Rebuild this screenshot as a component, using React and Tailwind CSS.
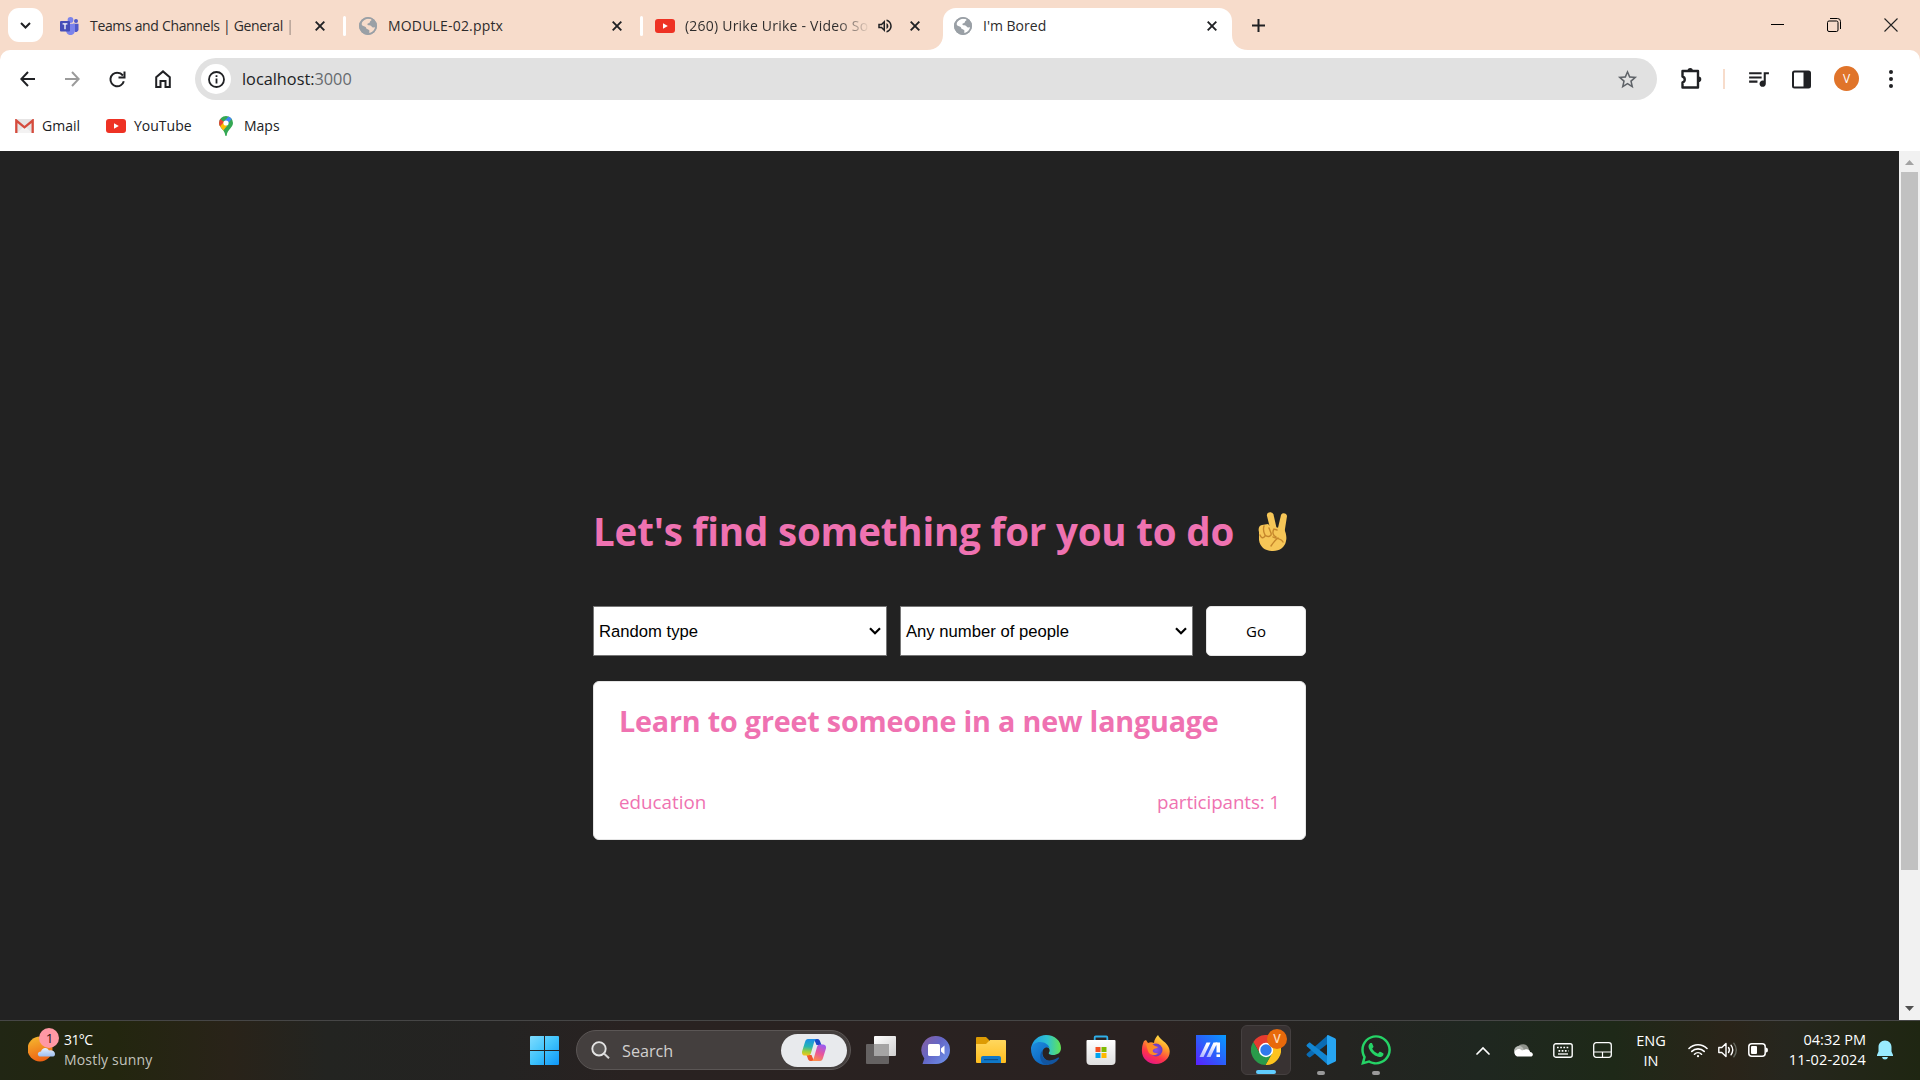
import React from "react";
import { MdQueueMusic, MdStarBorder, MdOutlineVolumeUp } from "react-icons/md";
import { FaWhatsapp } from "react-icons/fa";

const UI = "font-['Open_Sans','Noto_Sans',sans-serif]";

function Label({ className = "", children }) {
  return <span className={"shrink-0 whitespace-nowrap " + className}>{children}</span>;
}

function CloseX({ className = "" }) {
  return (
    <svg className={"h-[10px] w-[10px] shrink-0 " + className} viewBox="0 0 10 10">
      <path d="M.7.7l8.6 8.6M9.3.7L.7 9.3" stroke="#202124" strokeWidth="1.9" />
    </svg>
  );
}

function Globe({ hole }) {
  return (
    <svg className="h-[18px] w-[18px] shrink-0" viewBox="0 0 18 18">
      <circle cx="9" cy="9" r="9" fill="#9aa0a6" />
      <path
        d="M7 2.2c2-.7 4.500-.4 5.800.4-.2 1.400-1.800 1.300-2 2.600-.3 1.200-2.300.7-2.400 2.100 0 1.200 1.700.8 2.900 1.100 1.700.4 1.300 2 2.900 2.200l1.900-.3c-.4 2.700-2.600 5.200-5.600 5.700-.8-.9.6-2.200-.5-3.100-1-.8-2.800-.5-2.900-2.100-.1-1.500-2.600-1.300-3.800-2.300C1.700 6.500 3.600 3.300 7 2.200z"
        fill={hole}
      />
      <circle cx="9" cy="9" r="8.200" fill="none" stroke="#9aa0a6" strokeWidth="1.600" />
    </svg>
  );
}

function YouTube() {
  return (
    <svg className="h-[14px] w-5 shrink-0" viewBox="0 0 20 14">
      <rect width="20" height="14" rx="3" fill="#ee3224" />
      <path d="M8 4.200v5.600L12.800 7z" fill="#fff" />
    </svg>
  );
}

function Teams() {
  return (
    <svg className="h-[18px] w-[19px] shrink-0" viewBox="0 0 19 18">
      <circle cx="16" cy="4" r="2" fill="#5059c9" />
      <circle cx="10.500" cy="3" r="2.900" fill="#7b83eb" />
      <path d="M13 6.700h5.500v5.500c0 2-1.500 3-3.500 2.800z" fill="#5059c9" />
      <path d="M6 6.700h9v6.300c0 3-2 5-4.500 5S6 16 6 13z" fill="#7b83eb" />
      <rect y="4" width="10" height="10.500" rx="1" fill="#464eb8" />
      <path d="M2.600 6.800h4.800M5 6.800v5.400" stroke="#fff" strokeWidth="1.300" />
    </svg>
  );
}

function TabStrip() {
  return (
    <div className="flex h-[50px] items-center bg-[#f7dccb] pt-px text-[14px] text-[#2d2b2b]">
      <div className="-mt-px ml-2 flex h-[34px] w-[35px] shrink-0 items-center justify-center rounded-[11px] bg-white">
        <svg className="h-[7px] w-[11px]" viewBox="0 0 11 7">
          <path d="M1 1l4.500 4.500L10 1" fill="none" stroke="#202124" strokeWidth="2" />
        </svg>
      </div>
      <div className="ml-[17px] flex w-[283px] shrink-0 items-center">
        <Teams />
        <div className="ml-[11px] w-[205px] shrink-0">
          <Label className="tracking-[-0.33px]">Teams and Channels | General <span className="opacity-50">|</span></Label>
        </div>
        <CloseX className="ml-5" />
        <div className="ml-[18px] h-5 w-[3px] shrink-0 rounded bg-white" />
      </div>
      <div className="ml-[16px] flex w-[284px] shrink-0 items-center">
        <Globe hole="#f7dccb" />
        <div className="ml-[11px] w-[224px] shrink-0">
          <Label className="tracking-[0.18px]">MODULE-02.pptx</Label>
        </div>
        <CloseX />
        <div className="ml-[18px] h-5 w-[3px] shrink-0 rounded bg-white" />
      </div>
      <div className="ml-3 flex w-[272px] shrink-0 items-center">
        <YouTube />
        <div className="ml-[10px] w-[184px] shrink-0">
          <Label className="bg-gradient-to-r from-[#2d2b2b] from-82% to-[#e9d0c0] bg-clip-text tracking-[0.22px] text-transparent">
            (260) Urike Urike - Video So
          </Label>
        </div>
        <MdOutlineVolumeUp className="ml-[7px] h-[18px] w-[18px] shrink-0 text-[#202124]" />
        <CloseX className="ml-4" />
      </div>
      <div className="mt-[7px] flex h-[42px] w-[321px] shrink-0">
        <svg className="h-full w-4" viewBox="0 0 16 42">
          <path d="M0 42C9 42 16 36 16 27V42z" fill="#fff" />
        </svg>
        <div className="flex w-[289px] items-center rounded-t-[13px] bg-white pb-[7px] pl-[11px]">
          <Globe hole="#fff" />
          <div className="ml-[11px] w-[224px]">
            <Label>I'm Bored</Label>
          </div>
          <CloseX />
        </div>
        <svg className="h-full w-4" viewBox="0 0 16 42">
          <path d="M16 42C7 42 0 36 0 27V42z" fill="#fff" />
        </svg>
      </div>
      <svg className="ml-1 h-[13px] w-[13px] shrink-0" viewBox="0 0 13 13">
        <path d="M6.500 0v13M0 6.500h13" stroke="#202124" strokeWidth="2" />
      </svg>
      <svg className="-mt-0.5 ml-[506px] h-[13px] w-[13px] shrink-0" viewBox="0 0 13 13">
        <path d="M0 6.500h13" stroke="#000" />
      </svg>
      <svg className="-mt-0.5 ml-[43px] h-[14px] w-[14px] shrink-0" viewBox="0 0 14 14">
        <rect x=".5" y="3" width="10.500" height="10.500" rx="1.500" fill="none" stroke="#000" />
        <path d="M3 .5h7.500a3 3 0 013 3V11" fill="none" stroke="#000" />
      </svg>
      <svg className="-mt-0.5 ml-[43px] h-[14px] w-[14px] shrink-0" viewBox="0 0 14 14">
        <path d="M.5.5l13 13M13.500.5l-13 13" stroke="#222" strokeWidth="1.100" />
      </svg>
    </div>
  );
}

function Toolbar() {
  return (
    <div className="bg-[#f7dccb]">
      <div className="flex h-[50px] items-center rounded-t-[10px] bg-white pt-2">
        <svg className="ml-5 h-4 w-[15px]" viewBox="0 0 15 16">
          <path d="M15 8H1.500M8 1L1.300 8 8 15" fill="none" stroke="#202124" strokeWidth="2" />
        </svg>
        <svg className="ml-[30px] h-4 w-[15px]" viewBox="0 0 15 16">
          <path d="M0 8h13.500M7 1l6.700 7L7 15" fill="none" stroke="#9b9b9b" strokeWidth="2" />
        </svg>
        <svg className="ml-[29px] h-[17px] w-[17px]" viewBox="0 0 17 17">
          <path d="M14.800 10.300A6.800 6.800 0 118.500 1.700c2.200 0 4 1 5.500 2.800" fill="none" stroke="#202124" strokeWidth="2" />
          <path d="M15.500.5V6.500H9.500" fill="none" stroke="#202124" strokeWidth="2" />
        </svg>
        <svg className="ml-[29px] h-[18px] w-[16px]" viewBox="0 0 16 18">
          <path d="M1.200 17V7.200L8 1.400l6.800 5.800V17h-4.300v-6h-5v6z" fill="none" stroke="#202124" strokeWidth="2" />
        </svg>
        <div className="ml-[24px] flex h-[42px] w-[1462px] shrink-0 items-center rounded-full bg-[#e1e1e1] pl-[6px]">
          <div className="flex h-[30px] w-[30px] items-center justify-center rounded-full bg-white">
            <svg className="h-[17px] w-[17px]" viewBox="0 0 17 17">
              <circle cx="8.500" cy="8.500" r="7.500" fill="none" stroke="#202124" strokeWidth="1.800" />
              <path d="M8.500 7.500v5M8.500 4.300v1.800" stroke="#202124" strokeWidth="1.800" />
            </svg>
          </div>
          <div className="ml-[11px] pt-px text-[16.300px] text-[#202124]">
            <Label>localhost:<span className="text-[#666a6e]">3000</span></Label>
          </div>
          <MdStarBorder className="ml-auto mr-[18px] h-[23px] w-[23px] text-[#5f6368]" />
        </div>
        <svg className="-mt-0.5 ml-[23px] h-[22px] w-[22px]" viewBox="0 0 22 22">
          <path d="M2.500 4h15.500v16.500H2.500v-5c3-1 3-5 0-6z" fill="none" stroke="#202124" strokeWidth="2.400" strokeLinejoin="round" />
          <path d="M7.500 4a2.700 3 0 015.400 0zM18.500 9.500a2.800 2.800 0 010 5.600z" fill="#202124" />
        </svg>
        <div className="ml-[21px] h-5 w-[2px] bg-[#f7dccb]" />
        <MdQueueMusic className="-mt-0.5 ml-[21px] h-[25px] w-[25px] text-[#202124]" />
        <svg className="ml-[21px] h-[19px] w-[19px]" viewBox="0 0 19 19">
          <rect x="1" y="1.500" width="17" height="16" rx="1.500" fill="none" stroke="#202124" strokeWidth="2" />
          <path d="M11.500 1.500H18v16h-6.500z" fill="#202124" />
        </svg>
        <div className="-mt-px ml-[23px] flex h-[25px] w-[25px] items-center justify-center rounded-full bg-[#e0742a] text-[12px] text-white">V</div>
        <svg className="ml-[30px] h-[18px] w-1" viewBox="0 0 4 18">
          <circle cx="2" cy="2" r="2" fill="#202124" />
          <circle cx="2" cy="9" r="2" fill="#202124" />
          <circle cx="2" cy="16" r="2" fill="#202124" />
        </svg>
      </div>
    </div>
  );
}

function Bookmarks() {
  return (
    <div className="flex h-[51px] items-center bg-white text-[14px] text-[#202124]">
      <svg className="ml-[15px] h-[14px] w-[19px]" viewBox="0 0 19 14">
        <rect x="1" y="0" width="17" height="14" rx="1" fill="#e6e4e4" />
        <path d="M2 14l7.500-7L17 14z" fill="#f3f2f2" />
        <path d="M1.300 14V1.500l8.200 6.800 8.200-6.800V14" fill="none" stroke="#d54b3d" strokeWidth="2.300" />
      </svg>
      <div className="ml-2 w-[64px]"><Label>Gmail</Label></div>
      <YouTube />
      <div className="ml-2 w-[85px]"><Label>YouTube</Label></div>
      <svg className="h-5 w-[14px]" viewBox="0 0 14 20">
        <clipPath id="pin"><path d="M7 0a7 7 0 00-7 7c0 4.500 5.500 6.500 6.300 12.400q.7 1.200 1.400 0C8.500 13.500 14 11.500 14 7a7 7 0 00-7-7z" /></clipPath>
        <g clipPath="url(#pin)">
          <rect width="14" height="20" fill="#34a853" />
          <path d="M-1 11.500L11-1l3 2.500L3 14z" fill="#4285f4" />
          <path d="M-1 11l5-6 4 5-5 6z" fill="#fbbc04" />
          <path d="M0 2l5 4-5 5.500z" fill="#ea4335" />
        </g>
        <circle cx="7" cy="7" r="2.600" fill="#fff" />
      </svg>
      <div className="ml-[11px]"><Label>Maps</Label></div>
    </div>
  );
}

function Select({ label, className }) {
  return (
    <div className={"flex h-[50px] items-center justify-between border border-[#767676] bg-white px-[5px] font-['Liberation_Sans',Arial,sans-serif] text-[16.670px] text-black " + className}>
      <Label>{label}</Label>
      <svg className="h-[8px] w-[12px]" viewBox="0 0 12 8">
        <path d="M1 1.200l5 5 5-5" fill="none" stroke="#000" strokeWidth="2.200" />
      </svg>
    </div>
  );
}

function Peace() {
  return (
    <svg className="ml-6 mt-[6px] h-[39px] w-[29px] shrink-0" viewBox="0 0 29 39">
      <g fill="#f6c657">
        <path d="M1 20c-1-3 0-7 3-7l6-1 2 2 14 3c2 3 3 9 2 12-1 6-6 10-13 10C7 39 2 35 1 28z" />
        <path d="M9 4c-1-4 5-5 6.500-1.500L19 18l-6 2z" />
        <path d="M23 3c1-3 6-2 6 1l-2.500 16-7-2z" />
      </g>
      <path d="M6 14c-1 3 0 7 1 9 3 3 7 1 6-2l-2-5M2 23c1 3 3 4 5 1M15 25c3 2 8 1 10 5M20 26c-3 2-5 5-7 8M19 18l-3-1c-2 3-1 7 2 8" fill="none" stroke="#c6872c" strokeWidth="1.400" strokeLinecap="round" />
    </svg>
  );
}

function Page() {
  return (
    <div className="flex h-[869px] bg-[#222222]">
      <main className="w-[1899px] pt-[355px]">
        <div className="mx-auto w-[713px] text-[#ef72b1]">
          <div className="flex h-[50px]">
            <h1 className="text-[38.500px] font-bold leading-[51px]"><Label className="tracking-[-0.18px]">Let's find something for you to do</Label></h1>
            <Peace />
          </div>
          <div className="mt-[50px] flex justify-between">
            <Select label="Random type" className="w-[294px]" />
            <Select label="Any number of people" className="w-[293px]" />
            <button className="h-[50px] w-[100px] rounded-[5px] border border-[#e5e5e5] bg-white pt-px text-[15px] text-black"><Label>Go</Label></button>
          </div>
          <section className="mt-[25px] h-[159px] rounded-[6px] border border-[#e5e5e5] bg-white px-[25px] pt-[18px]">
            <h2 className="text-[28.700px] font-bold leading-[41px]"><Label className="tracking-[-0.18px]">Learn to greet someone in a new language</Label></h2>
            <div className="mt-[46px] flex justify-between text-[18.800px] leading-[31px]">
              <Label>education</Label>
              <Label className="tracking-[-0.1px]">participants: 1</Label>
            </div>
          </section>
        </div>
      </main>
      <div className="flex w-[21px] flex-col items-center bg-[#f1f1f1] pb-[9px] pt-[9px]">
        <svg className="h-[5px] w-[9px]" viewBox="0 0 9 5"><path d="M0 5L4.500 0 9 5z" fill="#a3a3a3" /></svg>
        <div className="mt-[7px] h-[698px] w-[17px] bg-[#c1c1c1]" />
        <svg className="mt-auto h-[5px] w-[9px]" viewBox="0 0 9 5"><path d="M0 0l4.500 5L9 0z" fill="#505050" /></svg>
      </div>
    </div>
  );
}

function Slot({ children, mark, active }) {
  return (
    <div className={"relative flex h-[50px] w-[50px] shrink-0 items-center justify-center rounded-[6px] " + (active ? "border border-[#454040] bg-[#383232]" : "")}>
      {children}
      {mark && <div className={"absolute bottom-0 h-1 rounded-full " + (active ? "w-5 bg-[#60cdff]" : "w-2 bg-[#9a9a9a]")} />}
    </div>
  );
}

const S = "h-[30px] w-[30px] shrink-0";

function TaskIcons() {
  return (
    <div className="ml-[5px] flex gap-[5px]">
      <Slot>
        <svg className={S} viewBox="0 0 30 30">
          <defs>
            <linearGradient id="tv" x1="0" y1="0" x2="1" y2="1"><stop stopColor="#fff" /><stop offset="1" stopColor="#cfcfcf" /></linearGradient>
          </defs>
          <rect x="8" y="1" width="22" height="20" rx="1" fill="url(#tv)" />
          <rect x="0" y="9" width="23" height="20" rx="1" fill="#6d6b6b" fillOpacity=".88" />
          <path d="M8 9h15v12H8z" fill="#a5a4a4" />
        </svg>
      </Slot>
      <Slot>
        <svg className={S} viewBox="0 0 30 30">
          <defs>
            <linearGradient id="chat" x1="0" y1="0" x2="1" y2=".8"><stop stopColor="#8a5d9e" /><stop offset=".5" stopColor="#6467c7" /><stop offset="1" stopColor="#6c8fe8" /></linearGradient>
          </defs>
          <path d="M15 1a14 14 0 110 28H1.500l1.800-5.500A14 14 0 0115 1z" fill="url(#chat)" />
          <rect x="7" y="9" width="12" height="12" rx="1.500" fill="#fff" />
          <path d="M20 13.500l3.500-3v9L20 16.500z" fill="#fff" />
        </svg>
      </Slot>
      <Slot>
        <svg className={S} viewBox="0 0 30 30">
          <defs>
            <linearGradient id="fold" x1="0" y1="0" x2="0" y2="1"><stop stopColor="#ffd75e" /><stop offset="1" stopColor="#ffbd1e" /></linearGradient>
          </defs>
          <path d="M0 3q0-1 1-1h9l3 3v6H0z" fill="#dd9b04" />
          <path d="M0 9h10l4-4h15q1 0 1 1v21q0 1-1 1H1q-1 0-1-1z" fill="url(#fold)" />
          <path d="M5 28v-5q0-2 2-2h16q2 0 2 2v5z" fill="#0f78c8" />
          <rect x="8" y="24" width="14" height="1.200" fill="#0b4f8c" />
        </svg>
      </Slot>
      <Slot>
        <svg className={S} viewBox="0 0 30 30">
          <defs>
            <linearGradient id="e1" x1="0" y1=".4" x2="1" y2=".4"><stop stopColor="#1c9be8" /><stop offset=".55" stopColor="#2fc2d0" /><stop offset="1" stopColor="#62e453" /></linearGradient>
            <linearGradient id="e2" x1="0" y1="0" x2=".7" y2="1"><stop stopColor="#1e8ee0" /><stop offset="1" stopColor="#0c62bb" /></linearGradient>
          </defs>
          <path d="M0 14C1 5 8 0 15 0c9 0 15 6 15 13 0 5-4 7-8 7-3 0-5-1-4-2.500 1.500-2 .5-5.500-3-5.500z" fill="url(#e1)" />
          <path d="M0 14c1-5 5-7 9-7 5 0 9 3 9.500 6-2-1.500-5-1-6.500 2-2 4 1 10 6 11l-3 4C6 30 0 23 0 14z" fill="url(#e2)" />
          <path d="M12 15c-3 6 2 12 9 10 3-.5 5-2 6-2.500 1-.3 1.500.3 1 1C25 28 20 30 15.500 30 9 29 7 19 12 15z" fill="#1255a0" />
        </svg>
      </Slot>
      <Slot>
        <svg className={S} viewBox="0 0 30 30">
          <defs>
            <linearGradient id="st" x1="0" y1="0" x2="0" y2="1"><stop stopColor="#fff" /><stop offset="1" stopColor="#dfdfdf" /></linearGradient>
          </defs>
          <path d="M8.700 7V2.500q0-1 1-1h10.600q1 0 1 1V7" fill="none" stroke="#2fb0ea" strokeWidth="1.800" />
          <path d="M.5 6q0-1 1-1h27q1 0 1 1v20q0 4-4 4h-21q-4 0-4-4z" fill="url(#st)" />
          <path d="M9.500 12h5v5h-5z" fill="#f25022" />
          <path d="M15.500 12h5v5h-5z" fill="#7fba00" />
          <path d="M9.500 18h5v5h-5z" fill="#00a4ef" />
          <path d="M15.500 18h5v5h-5z" fill="#ffb900" />
        </svg>
      </Slot>
      <Slot>
        <svg className={S} viewBox="0 0 30 30">
          <defs>
            <linearGradient id="ff" x1=".8" y1="0" x2=".3" y2="1"><stop stopColor="#fff44f" /><stop offset=".35" stopColor="#ffa02a" /><stop offset=".7" stopColor="#ff3647" /><stop offset="1" stopColor="#e31587" /></linearGradient>
            <radialGradient id="fp"><stop stopColor="#8b52e8" /><stop offset="1" stopColor="#6a3ac0" /></radialGradient>
          </defs>
          <path d="M3 6l2-1 2 3c2-1 4-1 6 0 0-3 2-6 4-8 2 5 9 7 11 13 3 8-4 16-13 16S0 22 1 14c0-3 1-6 2-8z" fill="url(#ff)" />
          <circle cx="15" cy="15" r="6.500" fill="url(#fp)" />
          <path d="M5 9c4-1 7 0 9 2l3 1c-1 2-4 1-5 3-1 1 1 4 5 3-3 4-9 2-10-2z" fill="#ff8a26" />
        </svg>
      </Slot>
      <Slot>
        <svg className={S} viewBox="0 0 30 30">
          <defs>
            <linearGradient id="as" x1="0" y1="1" x2="1" y2="0"><stop stopColor="#5b1fff" /><stop offset=".5" stopColor="#2a60fb" /><stop offset="1" stopColor="#079bff" /></linearGradient>
            <linearGradient id="bar" x1="0" y1="1" x2=".3" y2="0"><stop stopColor="#aab4ff" /><stop offset="1" stopColor="#fff" /></linearGradient>
          </defs>
          <path d="M0 0h30v30H0z" fill="url(#as)" />
          <path d="M3.500 22L10.500 7.500h4L7.500 22z" fill="url(#bar)" />
          <path d="M10.500 22l7-14.500h4L14.500 22z" fill="url(#bar)" />
          <path d="M19.500 7.500h4.500V17.500h-3.500V11z" fill="#fff" />
          <path d="M20.500 19.300H24V22h-3.500z" fill="#fff" />
        </svg>
      </Slot>
      <Slot active mark>
        <svg className={S} viewBox="0 0 30 30">
          <path d="M2.300 7A15 15 0 0128.270 8H15l-6.060 10.500z" fill="#e53b30" />
          <path d="M28.270 8A15 15 0 0114.430 30l6.630-11.500L15 8z" fill="#fcc31e" />
          <path d="M14.430 30A15 15 0 012.300 7l6.640 11.500h12.120z" fill="#299a4a" />
          <circle cx="15" cy="15" r="7.200" fill="#fff" />
          <circle cx="15" cy="15" r="5.700" fill="#3079ec" />
        </svg>
        <div className="absolute right-[3px] top-[3px] flex h-5 w-5 items-center justify-center rounded-full bg-[#e8690b] text-[12px] font-semibold text-[#ffd9b8]">V</div>
      </Slot>
      <Slot mark>
        <svg className={S} viewBox="0 0 30 30">
          <path d="M22 0L1 18.500c-.7.700-.7 1.300 0 2l1.700 1.500c.6.500 1.200.5 1.800.1L22 8.500z" fill="#0a6bb3" />
          <path d="M22 30L1 11.500c-.7-.7-.7-1.300 0-2L2.700 8c.6-.5 1.200-.5 1.800-.1L22 21.500z" fill="#1286d3" />
          <path d="M22 0l7 3.200q1 .5 1 1.600v20.400q0 1.100-1 1.600L22 30q-1 0-1-1V1q0-1 1-1z" fill="#27a5f2" />
        </svg>
      </Slot>
      <Slot mark>
        <FaWhatsapp className="h-[34px] w-[34px] shrink-0 text-[#25d366]" />
      </Slot>
    </div>
  );
}

function Tray() {
  return (
    <div className="ml-[62px] flex items-center">
      <div className="flex w-10 justify-center">
        <svg className="h-[9px] w-[14px]" viewBox="0 0 14 9"><path d="M1 8l6-6 6 6" fill="none" stroke="#fff" strokeWidth="1.700" strokeLinecap="round" /></svg>
      </div>
      <div className="flex w-10 justify-center">
        <svg className="h-[14px] w-5" viewBox="0 0 20 14">
          <path d="M4 8a6 6 0 0111-4l2 5H3z" fill="#8f938c" />
          <circle cx="6" cy="8" r="5" fill="#b9bcb7" />
          <path d="M4 13.500a3.700 3.700 0 010-7c2-1 4 0 5 1l3-1c3-1 5 1 5 2.500 4 .5 3.500 4.500.5 4.500z" fill="#fff" />
        </svg>
      </div>
      <div className="flex w-10 justify-center">
        <svg className="h-[15px] w-5" viewBox="0 0 20 15">
          <rect x=".8" y=".8" width="18.400" height="13.400" rx="2" fill="none" stroke="#fff" strokeWidth="1.400" />
          <path d="M4 4.500h12M5.500 7.800h10" stroke="#fff" strokeWidth="1.700" strokeDasharray="1.700 1.500" />
          <path d="M5 11h10" stroke="#fff" strokeWidth="1.300" />
        </svg>
      </div>
      <div className="flex w-10 justify-center pr-[2px]">
        <svg className="h-4 w-[19px]" viewBox="0 0 19 16">
          <rect x=".7" y=".7" width="17.600" height="14.600" rx="2.500" fill="none" stroke="#fff" strokeWidth="1.300" />
          <path d="M1 10h17M9.500 10v5" stroke="#fff" strokeWidth="1.200" />
        </svg>
      </div>
      <div className="flex w-14 flex-col items-center pt-px text-[14.500px] leading-5">
        <Label>ENG</Label>
        <Label>IN</Label>
      </div>
      <div className="ml-1 flex w-[30px] justify-center">
        <svg className="h-[15px] w-5" viewBox="0 0 20 15" fill="none" stroke="#fff" strokeWidth="1.600" strokeLinecap="round">
          <path d="M1 5.500a12.700 12.700 0 0118 0M3.800 8.400a8.800 8.800 0 0112.400 0M6.500 11.200a5 5 0 017 0" />
          <circle cx="10" cy="13.200" r="1.100" fill="#fff" stroke="none" />
        </svg>
      </div>
      <div className="flex w-[30px] justify-center">
        <svg className="h-4 w-5" viewBox="0 0 20 16" fill="none" stroke="#fff" strokeWidth="1.400" strokeLinecap="round">
          <path d="M.8 5.500h3L8 1.500v13l-4.200-4h-3z" strokeLinejoin="round" />
          <path d="M10.500 5.500q1.800 2.500 0 5M13 3.200q3.500 4.800 0 9.600" />
          <path d="M15.800 1.200q5 6.800 0 13.600" stroke="#666960" />
        </svg>
      </div>
      <div className="flex w-[30px] justify-center">
        <svg className="h-[14px] w-5" viewBox="0 0 20 14">
          <rect x=".8" y=".8" width="16.400" height="12.400" rx="3" fill="none" stroke="#fff" strokeWidth="1.500" />
          <rect x="3" y="3" width="6" height="8" rx="1" fill="#fff" />
          <path d="M18 4.500q2 0 2 2.500t-2 2.500z" fill="#fff" />
        </svg>
      </div>
      <div className="flex w-[93px] flex-col items-end text-[14.500px] leading-5">
        <Label>04:32 PM</Label>
        <Label className="tracking-[0.15px]">11-02-2024</Label>
      </div>
      <svg className="ml-[11px] h-5 w-4" viewBox="0 0 16 20">
        <path d="M8 .5c4 0 6.500 3 6.500 6.500v4.500L16 15v1H0v-1l1.500-3.500V7C1.500 3.500 4 .5 8 .5zM5 17h6q-.5 2.500-3 2.500T5 17z" fill="#99ebff" />
      </svg>
    </div>
  );
}

function Taskbar() {
  return (
    <div className="flex h-[60px] items-center bg-[linear-gradient(90deg,#212614_0%,#23260f_6%,#292319_12%,#232421_17%,#242322_26%,#292221_33%,#2a2221_60%,#242421_70%,#1f2720_77%,#1e2918_84%,#2a2419_90%,#26261e_93%,#1f2612_100%)] text-[14px] text-white shadow-[inset_0_1px_0_#464646]">
      <div className="flex w-[519px] shrink-0 items-center pl-7">
        <svg className="mt-[-10px] h-[34px] w-[31px]" viewBox="0 0 31 34">
          <defs>
            <linearGradient id="sun" x1=".3" y1="0" x2=".6" y2="1"><stop stopColor="#f5b52e" /><stop offset="1" stopColor="#ee5f12" /></linearGradient>
            <linearGradient id="cl" x1="0" y1="0" x2="0" y2="1"><stop stopColor="#e7f1fd" /><stop offset="1" stopColor="#9dbdee" /></linearGradient>
          </defs>
          <circle cx="12" cy="21" r="12.500" fill="url(#sun)" />
          <path d="M12 28.500c-3-.5-3-5 1-5 1-4 6-5 8-1 3-1 6 1 6 3.500 0 2-1 2.500-3 2.500z" fill="url(#cl)" />
          <circle cx="21" cy="10" r="10" fill="#ff98a4" />
          <text x="21.500" y="15" textAnchor="middle" fontSize="13.500" fill="#2a1416">1</text>
        </svg>
        <div className="ml-[5px] flex flex-col leading-5">
          <Label className="tracking-[-0.6px]">31°C</Label>
          <Label className="tracking-[0.18px] text-[#c2c3bd]">Mostly sunny</Label>
        </div>
      </div>
      <Slot>
        <svg className="h-[29px] w-[29px]" viewBox="0 0 29 29">
          <defs>
            <linearGradient id="win" x1="0" y1="0" x2="1" y2="1"><stop stopColor="#7fdcfe" /><stop offset=".5" stopColor="#3fc3fc" /><stop offset="1" stopColor="#0e96f8" /></linearGradient>
          </defs>
          <path d="M1 0h13v14H0V1q0-1 1-1zM15 0h13q1 0 1 1v13H15zM0 15h14v14H1q-1 0-1-1zM15 15h14v13q0 1-1 1H15z" fill="url(#win)" />
        </svg>
      </Slot>
      <div className="ml-[7px] flex h-10 w-[275px] shrink-0 items-center rounded-full border border-[#5b5655] bg-[#443f3e] pl-[14px] pr-[3px]">
        <svg className="h-[18px] w-[19px]" viewBox="0 0 19 18">
          <circle cx="8" cy="7.800" r="6.700" fill="#5d5a59" stroke="#e4e4e4" strokeWidth="1.900" />
          <path d="M13 12.500l5 4.800" stroke="#d5d5d5" strokeWidth="2" />
        </svg>
        <div className="ml-3 pt-0.5 text-[16.200px] text-[#d2d0cf]"><Label>Search</Label></div>
        <div className="ml-auto flex h-[33px] w-[66px] items-center justify-center rounded-full bg-[#e8eaed]">
          <svg className="h-[22px] w-6" viewBox="0 0 24 22">
            <defs>
              <linearGradient id="c1" x1=".3" y1="0" x2=".2" y2="1"><stop stopColor="#1a8fe8" /><stop offset=".45" stopColor="#27b6b0" /><stop offset=".75" stopColor="#9fcf3a" /><stop offset="1" stopColor="#f6c51d" /></linearGradient>
              <linearGradient id="c2" x1=".7" y1="0" x2=".3" y2="1"><stop stopColor="#9b5cf0" /><stop offset=".5" stopColor="#e8559c" /><stop offset="1" stopColor="#fb8f4c" /></linearGradient>
            </defs>
            <path d="M12 0h3.500c1.800 0 2.300 1.500 3 3.500l1 2.500h-5z" fill="#1b49c8" />
            <path d="M12 22H8.500c-1.800 0-2.300-1.500-3-3.500L4.500 16h5z" fill="#f0562e" />
            <path d="M6 0h8.500c-1.500.5-2 2-2.500 3.500L9 14c-.6 1.800-1.500 2.500-3 2.500H3c-2.500 0-3.500-2-2.800-4.500L3 3C3.500 1 4.500 0 6 0z" fill="url(#c1)" />
            <path d="M18 22H9.500c1.500-.5 2-2 2.500-3.500L15 8c.6-1.800 1.500-2.500 3-2.500h3c2.500 0 3.500 2 2.800 4.500L21 19c-.5 2-1.500 3-3 3z" fill="url(#c2)" />
          </svg>
        </div>
      </div>
      <TaskIcons />
      <Tray />
    </div>
  );
}

export default function App() {
  return (
    <div className={"h-[1080px] w-[1920px] overflow-hidden " + UI}>
      <TabStrip />
      <Toolbar />
      <Bookmarks />
      <Page />
      <Taskbar />
    </div>
  );
}
